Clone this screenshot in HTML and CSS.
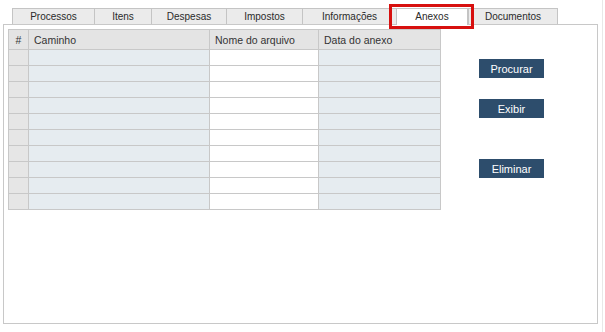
FILE: index.html
```html
<!DOCTYPE html>
<html lang="pt">
<head>
  <meta charset="UTF-8" />
  <title>Anexos</title>
  <link rel="stylesheet" href="styles.css">
</head>
<body>
  <div class="frame">
    <div class="tabs">
      <div class="tab tab-processos">Processos</div>
      <div class="tab tab-itens">Itens</div>
      <div class="tab tab-despesas">Despesas</div>
      <div class="tab tab-impostos">Impostos</div>
      <div class="tab tab-info">Informações</div>
      <div class="tab tab-anexos active">Anexos</div>
      <div class="tab tab-docs">Documentos</div>
    </div>

    <div class="panel">
      <table class="grid">
        <colgroup>
          <col class="col-num">
          <col class="col-path">
          <col class="col-name">
          <col class="col-date">
        </colgroup>
        <thead>
          <tr>
            <th class="hash">#</th>
            <th>Caminho</th>
            <th>Nome do arquivo</th>
            <th>Data do anexo</th>
          </tr>
        </thead>
        <tbody>
          <tr><td class="num"></td><td class="path"></td><td class="name"></td><td class="date"></td></tr>
          <tr><td class="num"></td><td class="path"></td><td class="name"></td><td class="date"></td></tr>
          <tr><td class="num"></td><td class="path"></td><td class="name"></td><td class="date"></td></tr>
          <tr><td class="num"></td><td class="path"></td><td class="name"></td><td class="date"></td></tr>
          <tr><td class="num"></td><td class="path"></td><td class="name"></td><td class="date"></td></tr>
          <tr><td class="num"></td><td class="path"></td><td class="name"></td><td class="date"></td></tr>
          <tr><td class="num"></td><td class="path"></td><td class="name"></td><td class="date"></td></tr>
          <tr><td class="num"></td><td class="path"></td><td class="name"></td><td class="date"></td></tr>
          <tr><td class="num"></td><td class="path"></td><td class="name"></td><td class="date"></td></tr>
          <tr><td class="num"></td><td class="path"></td><td class="name"></td><td class="date"></td></tr>
        </tbody>
      </table>

      <div class="actions">
        <button class="btn btn-procurar">Procurar</button>
        <button class="btn btn-exibir">Exibir</button>
        <button class="btn btn-eliminar">Eliminar</button>
      </div>
    </div>
  </div>
</body>
</html>
```

FILE: styles.css
```css
body {
  margin: 0;
  background: #ffffff;
  font-family: "Liberation Sans", Arial, sans-serif;
  font-size: 10px;
  color: #2a2a2a;
}

.frame {
  width: 603px;
  height: 332px;
  border-right: 1px solid #e8e8e8;
  padding-top: 8px;
  box-sizing: border-box;
}

/* tab strip */
.tabs {
  display: flex;
  margin-left: 12px;
  height: 16px;
}

.tab {
  box-sizing: border-box;
  height: 16px;
  line-height: 15px;
  text-align: center;
  background: #ebebeb;
  border: 1px solid #c4c4c4;
  border-bottom: none;
  border-right: none;
}

.tab-processos { width: 82px; }
.tab-itens { width: 57px; }
.tab-despesas { width: 75px; }
.tab-impostos { width: 76px; }
.tab-info { width: 94px; }
.tab-anexos { width: 72px; }
.tab-docs { width: 90px; border-right: 1px solid #c4c4c4; }

.tab.active {
  position: relative;
  background: #ffffff;
  border-right: 1px solid #c4c4c4;
  height: 17px;
  margin-bottom: -1px;
}

.tab.active::after {
  content: "";
  position: absolute;
  left: -8px;
  right: -7px;
  top: -5px;
  bottom: -4px;
  border: 3px solid #d7100f;
}

/* panel */
.panel {
  display: flex;
  align-items: flex-start;
  margin-left: 3px;
  width: 595px;
  height: 300px;
  box-sizing: border-box;
  border: 1px solid #c8c8c8;
  padding: 4px 0 0 4px;
}

.grid {
  border-collapse: collapse;
  table-layout: fixed;
  width: 432px;
}

.col-num { width: 20px; }
.col-path { width: 181px; }
.col-name { width: 109px; }
.col-date { width: 122px; }

.grid th,
.grid td {
  border: 1px solid #c8c8c8;
  padding: 0;
}

.grid th {
  height: 19px;
  background: #e4e4e4;
  font-size: 10.5px;
  font-weight: normal;
  text-align: left;
  padding-left: 5px;
  color: #333333;
  white-space: nowrap;
  overflow: hidden;
}

.grid th.hash {
  padding-left: 0;
  text-align: center;
}

.grid td {
  height: 15px;
}

.num { background: #e6e6e6; }
.path { background: #e6ecf0; }
.name { background: #ffffff; }
.date { background: #e6ecf0; }

/* action buttons */
.actions {
  display: flex;
  flex-direction: column;
  margin-left: 38px;
  padding-top: 30px;
}

.btn {
  width: 65px;
  height: 19px;
  padding: 0;
  border: none;
  background: #2d4d6c;
  color: #ffffff;
  font-family: "Liberation Sans", Arial, sans-serif;
  font-size: 11px;
}

.btn-exibir { margin-top: 21px; }
.btn-eliminar { margin-top: 41px; }
```
